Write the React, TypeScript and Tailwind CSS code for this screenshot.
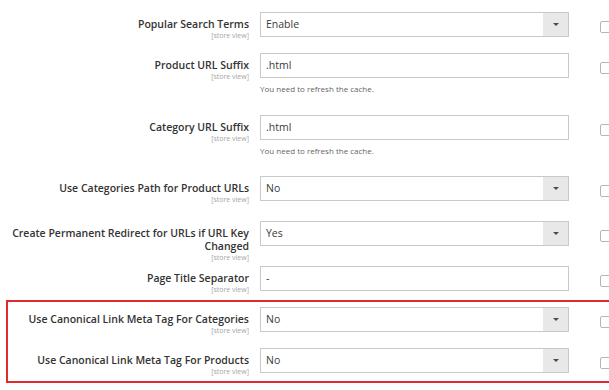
import React from "react";

type RowProps = {
  label: string;
  kind: "select" | "input";
  value: string;
  note?: string;
  h: number;
  lw: number;
};

function Row({ label, kind, value, note, h, lw }: RowProps) {
  return (
    <div className="flex items-start" style={{ height: h }}>
      <div className="shrink-0 text-right pt-[6px]" style={{ width: lw }}>
        <div className="text-[10.5px] leading-[13px] font-semibold text-[#333333]">{label}</div>
        <div className="text-[7px] leading-[9px] text-[#a6a6a6]">[store view]</div>
      </div>
      <div className="ml-[11px] w-[309px] shrink-0">
        <div className="h-[25px] border border-[#c9c9c9] bg-white flex items-center">
          <div className="flex-1 pl-[5px] text-[10.5px] text-[#3a3a3a]">{value}</div>
          {kind === "select" && (
            <div className="w-[25px] h-full bg-[#e8e8e8] flex items-center justify-center">
              <div className="w-0 h-0 border-l-[3px] border-r-[3px] border-t-[3px] border-l-transparent border-r-transparent border-t-[#514943]" />
            </div>
          )}
        </div>
        {note && (
          <div className="mt-[6px] text-[8px] leading-[10px] text-[#666]">{note}</div>
        )}
      </div>
      <div className="ml-[31px] mt-[9px] w-[12px] h-[12px] shrink-0 border border-[#b5b5b5] rounded-[2px] bg-white" />
    </div>
  );
}

export default function App() {
  const font = { fontFamily: '"Open Sans", "Noto Sans", sans-serif' };
  return (
    <div className="w-[609px] h-[390px] bg-white overflow-hidden" style={font}>
      <div className="pt-[12px] w-[640px]">
        <Row lw={249} h={41} label="Popular Search Terms" kind="select" value="Enable" />
        <Row lw={249} h={62} label="Product URL Suffix" kind="input" value=".html" note="You need to refresh the cache." />
        <Row lw={249} h={61} label="Category URL Suffix" kind="input" value=".html" note="You need to refresh the cache." />
        <Row lw={249} h={45} label="Use Categories Path for Product URLs" kind="select" value="No" />
        <Row lw={249} h={45} label="Create Permanent Redirect for URLs if URL Key Changed" kind="select" value="Yes" />
        <Row lw={249} h={34} label="Page Title Separator" kind="input" value="-" />
        <div className="ml-[6px] border-2 border-[#e3292b] pt-[5px] h-[83px]">
          <Row lw={241} h={41} label="Use Canonical Link Meta Tag For Categories" kind="select" value="No" />
          <Row lw={241} h={33} label="Use Canonical Link Meta Tag For Products" kind="select" value="No" />
        </div>
      </div>
    </div>
  );
}
